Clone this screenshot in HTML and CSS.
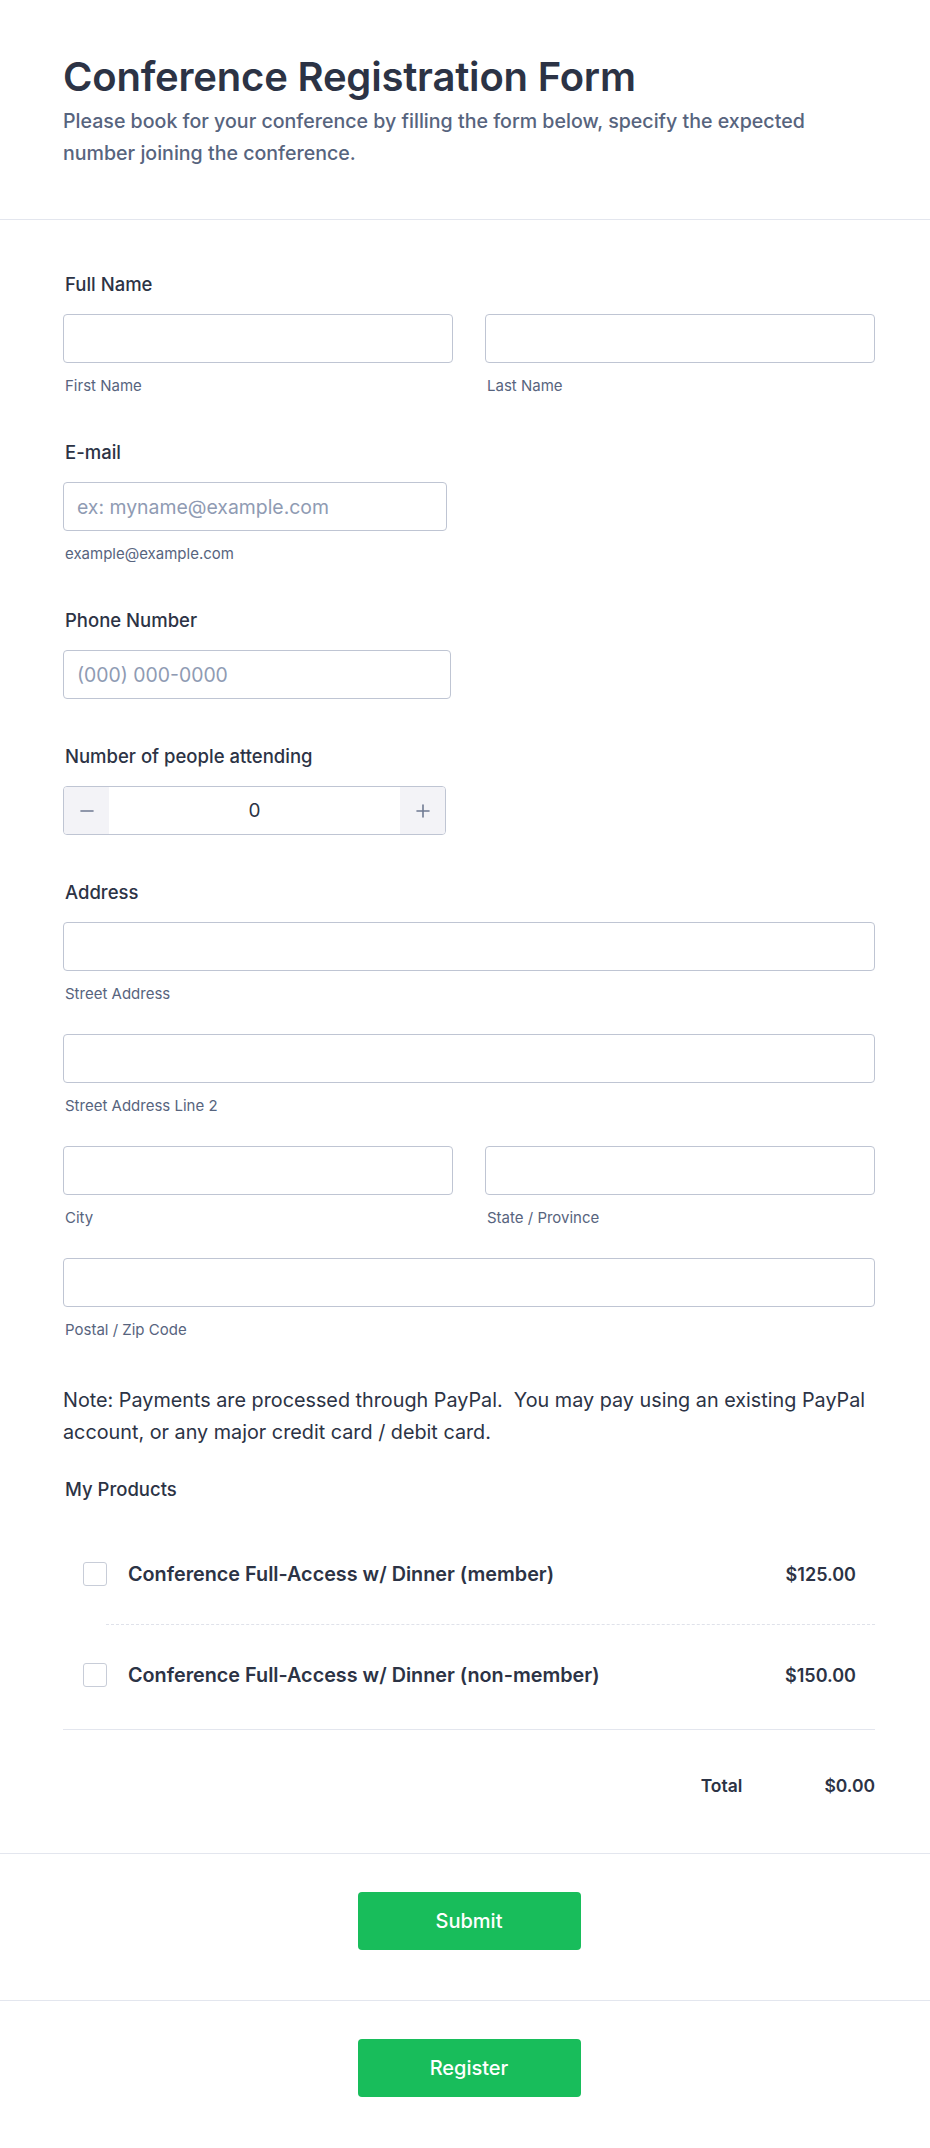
FILE: index.html
```html
<!DOCTYPE html>
<html lang="en">
<head>
<meta charset="utf-8">
<title>Conference Registration Form</title>
<link rel="stylesheet" href="styles.css">
</head>
<body>
<div class="form">
  <header class="header">
    <h1 class="title">Conference Registration Form</h1>
    <p class="subtitle">Please book for your conference by filling the form below, specify the expected number joining the conference.</p>
  </header>

  <section class="body">
    <div class="field">
      <div class="label">Full Name</div>
      <div class="cols">
        <div class="col">
          <input class="input" type="text">
          <div class="sub">First Name</div>
        </div>
        <div class="col">
          <input class="input" type="text">
          <div class="sub">Last Name</div>
        </div>
      </div>
    </div>

    <div class="field">
      <div class="label">E-mail</div>
      <input class="input w-email" type="text" placeholder="ex: myname@example.com">
      <div class="sub sub-email">example@example.com</div>
    </div>

    <div class="field">
      <div class="label">Phone Number</div>
      <input class="input w-phone" type="text" placeholder="(000) 000-0000">
    </div>

    <div class="field">
      <div class="label">Number of people attending</div>
      <div class="spinner">
        <span class="spin-btn">
          <svg width="14" height="14" viewBox="0 0 14 14"><path d="M1 7h12" stroke="#6f7a92" stroke-width="1.6" stroke-linecap="round"/></svg>
        </span>
        <span class="spin-value">0</span>
        <span class="spin-btn">
          <svg width="14" height="14" viewBox="0 0 14 14"><path d="M1 7h12M7 1v12" stroke="#6f7a92" stroke-width="1.6" stroke-linecap="round"/></svg>
        </span>
      </div>
    </div>

    <div class="field">
      <div class="label">Address</div>
      <input class="input" type="text">
      <div class="sub">Street Address</div>
      <input class="input addr" type="text">
      <div class="sub">Street Address Line 2</div>
      <div class="cols addr">
        <div class="col">
          <input class="input" type="text">
          <div class="sub">City</div>
        </div>
        <div class="col">
          <input class="input" type="text">
          <div class="sub">State / Province</div>
        </div>
      </div>
      <input class="input addr" type="text">
      <div class="sub">Postal / Zip Code</div>
    </div>

    <p class="note">Note: Payments are processed through PayPal.&nbsp; You may pay using an existing PayPal account, or any major credit card / debit card.</p>

    <div class="label products-label">My Products</div>
    <div class="products">
      <div class="product">
        <span class="check"></span>
        <span class="pname">Conference Full-Access w/ Dinner (member)</span>
        <span class="price">$125.00</span>
      </div>
      <div class="dotted"></div>
      <div class="product">
        <span class="check"></span>
        <span class="pname">Conference Full-Access w/ Dinner (non-member)</span>
        <span class="price">$150.00</span>
      </div>
    </div>
    <div class="total">
      <span class="total-label">Total</span>
      <span class="total-value">$0.00</span>
    </div>
  </section>

  <div class="actions">
    <button class="btn" type="button">Submit</button>
  </div>
  <div class="actions last">
    <button class="btn" type="button">Register</button>
  </div>
</div>
</body>
</html>
```

FILE: styles.css
```css
* { box-sizing: border-box; }
html, body { margin: 0; padding: 0; background: #ffffff; }
body {
  font-family: Inter, "Noto Sans", "Liberation Sans", sans-serif;
  color: #2c3345;
}
.form { width: 930px; }

.header {
  padding: 53px 55px 50px 63px;
  border-bottom: 1px solid #e3e6ee;
}
.title {
  margin: 0;
  font-size: 40px;
  line-height: 48px;
  font-weight: 600;
  color: #2c3345;
  letter-spacing: -0.2px;
}
.subtitle {
  margin: 4px 0 0;
  font-size: 19.6px;
  line-height: 32px;
  font-weight: 500;
  color: #57647e;
  max-width: 800px;
}

.body {
  padding: 52px 55px 55px 63px;
  border-bottom: 1px solid #e3e6ee;
}
.field { margin-bottom: 45px; }
.label {
  font-size: 18.5px;
  line-height: 24px;
  font-weight: 500;
  color: #2c3345;
  padding-left: 2px;
  margin-bottom: 18px;
}
.cols { display: flex; gap: 32px; }
.col { flex: 1; min-width: 0; }
.input {
  display: block;
  width: 100%;
  height: 49px;
  border: 1px solid #bfc5d3;
  border-radius: 4px;
  background: #fff;
  font-family: inherit;
  font-size: 19.4px;
  color: #2c3345;
  padding: 0 13px;
  outline: none;
}
.input::placeholder { color: #8f9bb3; }
.w-email { width: 384px; }
.w-phone { width: 388px; }
.sub {
  font-size: 15px;
  line-height: 18px;
  color: #57647e;
  margin-top: 14px;
  padding-left: 2px;
}
.addr { margin-top: 31px; }

.spinner {
  display: flex;
  width: 383px;
  height: 49px;
  border: 1px solid #bfc5d3;
  border-radius: 4px;
  overflow: hidden;
}
.spin-btn {
  width: 45px;
  flex: none;
  background: #f3f3f7;
  display: flex;
  align-items: center;
  justify-content: center;
}
.spin-value {
  flex: 1;
  display: flex;
  align-items: center;
  justify-content: center;
  font-size: 19px;
  color: #2c3345;
}

.note {
  margin: 0 0 29px;
  font-size: 19.8px;
  line-height: 32px;
  color: #2c3345;
}
.products-label { margin-bottom: 23px; }
.products {
  border-bottom: 1px solid #e3e6ee;
  padding-bottom: 4px;
}
.product {
  display: flex;
  align-items: center;
  height: 100px;
  padding: 0 19px 0 20px;
}
.check {
  width: 24px;
  height: 24px;
  flex: none;
  border: 1px solid #c8cdd8;
  border-radius: 3px;
  background: #fff;
  margin-right: 21px;
}
.pname {
  flex: 1;
  font-size: 19.8px;
  font-weight: 600;
  color: #2c3345;
}
.price {
  font-size: 18px;
  font-weight: 600;
  color: #2c3345;
}
.dotted {
  margin-left: 43px;
  border-top: 1px dashed #dfe2ea;
}
.total {
  display: flex;
  justify-content: flex-end;
  align-items: center;
  gap: 82px;
  margin-top: 44px;
  line-height: 24px;
}
.total-label {
  font-size: 17.5px;
  font-weight: 600;
  color: #2c3345;
}
.total-value {
  font-size: 17.5px;
  font-weight: 600;
  color: #2c3345;
}

.actions {
  display: flex;
  justify-content: center;
  padding: 38px 55px 50px 63px;
  border-bottom: 1px solid #e3e6ee;
}
.actions.last { border-bottom: none; padding-bottom: 52px; }
.btn {
  width: 223px;
  height: 58px;
  border: none;
  border-radius: 4px;
  background: #18bd5b;
  color: #ffffff;
  font-family: inherit;
  font-size: 20px;
  font-weight: 500;
  cursor: pointer;
}
```
